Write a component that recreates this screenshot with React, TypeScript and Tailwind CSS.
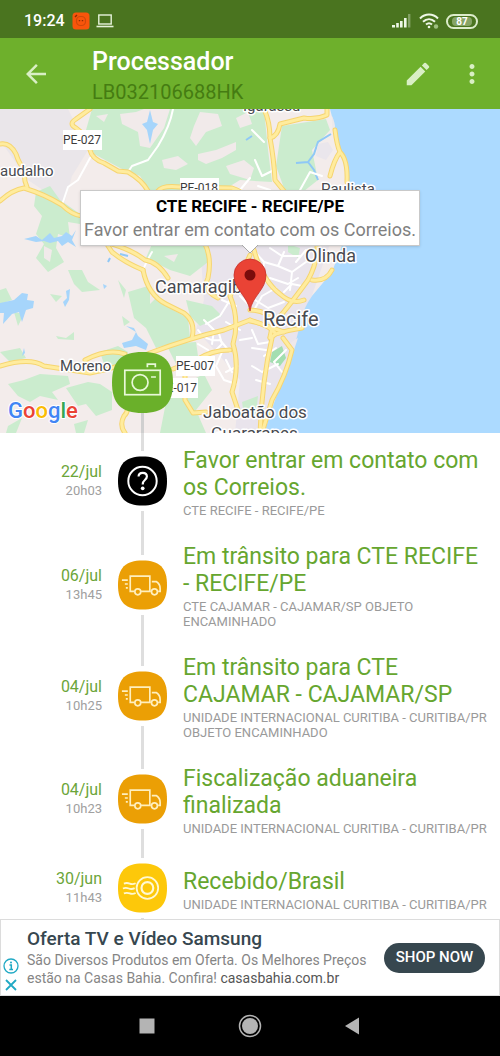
import React from "react";
import { MdArrowBack, MdEdit, MdMoreVert } from "react-icons/md";

type IconKind = "question" | "truck" | "received";

interface TrackingEvent {
  date: string;
  time: string;
  title: string;
  place: string;
  icon: IconKind;
}

const events: TrackingEvent[] = [
  {
    date: "22/jul",
    time: "20h03",
    title: "Favor entrar em contato com os Correios.",
    place: "CTE RECIFE - RECIFE/PE",
    icon: "question",
  },
  {
    date: "06/jul",
    time: "13h45",
    title: "Em trânsito para CTE RECIFE - RECIFE/PE",
    place: "CTE CAJAMAR - CAJAMAR/SP OBJETO ENCAMINHADO",
    icon: "truck",
  },
  {
    date: "04/jul",
    time: "10h25",
    title: "Em trânsito para CTE CAJAMAR - CAJAMAR/SP",
    place: "UNIDADE INTERNACIONAL CURITIBA - CURITIBA/PR OBJETO ENCAMINHADO",
    icon: "truck",
  },
  {
    date: "04/jul",
    time: "10h23",
    title: "Fiscalização aduaneira finalizada",
    place: "UNIDADE INTERNACIONAL CURITIBA - CURITIBA/PR",
    icon: "truck",
  },
  {
    date: "30/jun",
    time: "11h43",
    title: "Recebido/Brasil",
    place: "UNIDADE INTERNACIONAL CURITIBA - CURITIBA/PR",
    icon: "received",
  },
];

const SQUIRCLE = "M25 0C42.500 0 50 7.500 50 25S42.500 50 25 50 0 42.500 0 25 7.500 0 25 0Z";

function StatusBar() {
  return (
    <div className="flex h-[38px] shrink-0 items-center bg-[#4a741f] pl-6 pr-[22px] pt-1 text-white">
      <span className="text-base font-medium">19:24</span>
      <svg className="ml-[7px]" width="18" height="18" viewBox="0 0 18 18">
        <rect x="0.5" y="0.5" width="17" height="17" rx="3.5" fill="#f8550b" />
        <rect x="4.5" y="4.5" width="9" height="9" rx="4" fill="none" stroke="#cf480a" strokeWidth="1.2" />
        <path d="M6.800 8.600h1.400M9.800 8.600h1.400M3 5l2-2" stroke="#8c2d04" strokeWidth="1.4" />
      </svg>
      <svg className="ml-[6px]" width="18" height="14" viewBox="0 0 18 14" fill="none" stroke="#e6f2da">
        <rect x="2.8" y="1" width="12.4" height="9" strokeWidth="1.4" />
        <path d="M0.5 12.5h17" strokeWidth="1.6" />
      </svg>
      <div className="ml-auto flex items-center gap-[7px]">
        <svg width="20" height="14" viewBox="0 0 20 14" fill="#eef7e6">
          <path d="M0 11h3v2.500H0zM4.200 9h2.600v4.500H4.200zM8 7h2.600v6.500H8zM12 4h2.600v9.500H12z" />
          <path d="M16 0h2.400v13.500H16z" opacity="0.35" />
        </svg>
        <svg width="20" height="16" viewBox="0 0 20 16" fill="none" stroke="#eef7e6" strokeWidth="2">
          <path d="M1 5.500C6.200 0.300 13.800 0.300 19 5.500M4 8.700c3.600-3.400 8.400-3.400 12 0M7 11.600c1.800-1.700 4.200-1.700 6 0" />
          <circle cx="10" cy="14" r="1.300" fill="#eef7e6" stroke="none" />
          <circle cx="17" cy="13.500" r="2.200" fill="#9fbf80" stroke="none" />
        </svg>
        <div className="flex h-[15px] w-8 items-center justify-center rounded-full border-2 border-[#dcecca] p-px">
          <span className="flex h-full w-5 items-center justify-center rounded-sm bg-[#86a465] text-[10px] font-bold">
            87
          </span>
        </div>
      </div>
    </div>
  );
}

function Toolbar() {
  return (
    <header className="flex h-[71px] shrink-0 items-center bg-[#6eb02c] pl-[21px] pr-[13px] text-[#d9efc5]">
      <button aria-label="Voltar">
        <MdArrowBack size={30} />
      </button>
      <div className="ml-[41px] flex-1 pt-[6px]">
        <h1 className="text-[25px] font-medium leading-[30px] text-white">Processador</h1>
        <p className="text-xl leading-[30px] text-[#457c12]">LB032106688HK</p>
      </div>
      <button aria-label="Editar">
        <MdEdit size={30} />
      </button>
      <button aria-label="Mais opções" className="ml-6">
        <MdMoreVert size={30} />
      </button>
    </header>
  );
}

const mainRoads = [
  "M90 109L76 119Q68 124 76 128Q88 136 90 150Q92 159 104 163L118 171L128 172Q142 180 148 191",
  "M0 144Q10 142 16 154Q19 164 25 170Q23 178 27 187",
  "M0 201Q12 190 24 188Q44 194 62 205Q72 215 82 216Q100 232 112 252Q124 262 143 270",
  "M112 244Q132 250 145 260Q158 262 168 278",
  "M158 191Q162 185 180 187L232 188Q244 192 250 200",
  "M205 244Q212 258 208 278Q202 290 218 298",
  "M143 270Q148 295 166 304L184 313Q196 322 192 338",
  "M0 366Q30 357 44 366Q70 370 90 373Q120 368 150 353Q190 338 224 330L250 320",
  "M85 360Q108 348 125 354",
  "M125 433Q119 425 124 416Q132 409 122 392",
  "M173 369L196 360Q212 350 230 350",
  "M185 372V400L193 413L206 412",
  "M250 255Q240 278 230 296Q240 320 233 344Q240 366 232 392L238 410",
  "M254 250Q262 280 280 294Q292 305 304 300",
  "M264 109Q270 122 270 138Q274 160 275 180L284 191",
  "M327 109V115Q316 120 304 118L280 124Q278 136 270 138",
  "M335 130Q337 146 340 152Q334 160 330 176M340 152Q348 160 347 182",
  "M250 320L284 332M250 310Q266 310 276 322",
  "M317 244Q318 262 308 280Q292 302 282 314Q272 322 270 337M332 270Q326 282 312 280",
  "M250 321Q268 324 276 334Q288 330 302 328M276 334L270 338",
  "M272 338Q262 380 260 433M283 338L292 350Q286 376 272 400L262 433",
];

const streets = [
  "M173 109Q170 126 158 146L148 160L132 166L128 172",
  "M90 158L78 180L68 187L63 202",
  "M143 270Q146 262 152 252",
  "M255 252L264 262L278 266L284 252M264 262L262 278L276 288M278 266L292 272L306 262M292 272L290 290M306 250L296 262M270 248L282 256L300 256M262 278L250 290M276 288L262 296L254 310",
  "M198 330Q206 342 220 340L230 352M204 320L214 330L212 344M230 300L220 316L206 324M222 352L216 366L224 380L236 384M240 330L226 322M252 330L258 344L270 342M255 300L268 308L284 302M252 348L266 350",
  "M238 366L226 372M252 366L262 372L278 364M256 380L270 384M286 350L274 362L282 372",
  "M220 286L232 280L244 286M222 300L236 306M240 296L248 304M262 284L270 278L288 284L298 278M258 270L252 262M284 292L292 284L302 286M218 330L222 344L214 352M198 344L208 350M240 340L252 338M226 360L232 372M264 356L276 348",
  "M252 130L264 142M255 160L262 176L274 170M258 186L270 190M300 190L310 172L322 176M240 190L250 178",
];

function MapLabel({ x, y, size, children }: { x: number; y: number; size: number; children: string }) {
  return (
    <text
      x={x}
      y={y}
      fontSize={size}
      fill="#484a50"
      stroke="#fff"
      strokeWidth="3"
      strokeLinejoin="round"
      paintOrder="stroke"
    >
      {children}
    </text>
  );
}

function RoadBadge({ x, y, children }: { x: number; y: number; children: string }) {
  return (
    <g>
      <rect x={x} y={y} width="39" height="20" fill="#fff" />
      <text x={x + 19} y={y + 14} fontSize="12" textAnchor="middle" fill="#3c3c3c">
        {children}
      </text>
    </g>
  );
}

function TrackingMap() {
  return (
    <section className="relative h-[324px] shrink-0 overflow-hidden">
      <svg
        className="h-full w-full"
        viewBox="0 109 500 324"
        preserveAspectRatio="xMidYMid slice"
        role="img"
        aria-label="Mapa de Recife"
      >
        <rect y="109" width="500" height="324" fill="#f3eceb" />
        <path d="M0 109H68L88 150L72 176L64 204L28 180L0 140Z" fill="#eae6ea" />
        <path d="M200 244H330L300 330L290 370L262 433H235L240 380L220 356L196 330L204 300Z" fill="#e9e4ec" />

        {/* forest */}
        <g fill="#cbecce">
          <path d="M92 109H264L268 150L272 182L240 180L222 191H150L140 176L120 168L94 154L86 130Z" />
          <path d="M282 126L326 119L330 130L312 150L318 180L304 191H285L276 166Z" />
          <path d="M36 192L50 186L60 200L80 214V224L68 222L70 238L58 234L56 248L64 262L48 272L36 258L44 244L36 234L42 216L34 206Z" />
          <path d="M152 244H205L208 262L190 276L170 270L146 258Z" />
          <path d="M128 292L148 286L162 304L188 318L190 338L156 348L146 328L134 318Z" />
          <path d="M186 300L212 306L222 316L200 326L190 316Z" />
          <path d="M0 290L6 288L12 300L0 304ZM68 270H82L88 282L100 290L82 292L74 284ZM14 312L24 314L18 326ZM56 336L66 338L74 332V340L58 339ZM100 352L118 346L128 352L122 368L104 364Z" />
          <path d="M166 344L196 342L198 356L176 364Z" />
          <path d="M0 352L20 348L26 358L10 362ZM8 384L24 380L40 374L68 376L70 384L52 392L58 400L40 396L30 402L18 396ZM66 388L88 382L100 384L112 392V410L96 416L86 404L78 406Z" />
          <path d="M168 392L204 374L212 390L196 410L206 433H160Z" />
          <path d="M8 426L22 418L16 433H6ZM74 424L88 420L84 433H76ZM242 402L258 396L256 414H244Z" />
          <path d="M288 244L300 248L298 258L288 252ZM118 280L126 290L124 298ZM122 316L130 322L124 326ZM50 294L62 296L56 302Z" />
        </g>
        <path d="M272 352L282 346L286 358L280 366L270 362Z" fill="#a3deb0" />

        {/* clearings */}
        <g fill="#f1eaea">
          <path d="M120 114L136 112L144 109H170L164 128L150 148L140 146L138 132L122 124Z" />
          <path d="M194 126L200 112L218 114L222 126L206 132L196 146L190 138Z" />
          <path d="M198 154L216 150L236 142V150L222 158L206 164L198 160ZM162 160L178 156L188 164L176 170L164 168ZM226 166L244 160L254 168L250 180L230 174ZM236 118L248 112L252 124L240 128ZM96 116L108 114L104 122Z" />
          <path d="M150 292L156 298L150 304ZM164 256L178 254L174 262ZM44 246L52 250L50 262L44 258Z" />
        </g>

        {/* water */}
        <g fill="#a6d5fb">
          <path d="M330 109H500V433H264Q274 402 284 376Q294 350 300 325Q302 310 312 296Q322 284 332 272Q338 256 344 240Q350 210 348 188Q344 162 339 144Q334 124 330 109Z" fill="#acdaff" />
          <path d="M0 303L14 300L22 293L28 294L27 300L34 301L33 308L26 310L22 322L19 312L12 314L3 324L4 313H0Z" />
          <path d="M24 239L36 236L42 240L50 233L54 238L62 236L66 232L72 236L76 230L72 240L76 247L68 242L62 246L58 241L50 243L44 241L36 242L28 240Z" />
          <path d="M142 124L147 122L150 110L153 122L158 124L153 130L150 144L147 130Z" />
          <path d="M66 291L70 289L69 300L65 307L63 302L67 298ZM103 284L107 286L104 289ZM122 343L132 340L136 332L126 326L134 328L138 336L148 344L146 350L136 346L124 348ZM24 348L25 353L22 356Z" />
        </g>
        <g fill="none" stroke="#8fc8f6" strokeWidth="2">
          <path d="M331 134L318 142L314 154L308 162L296 163M308 162L314 170L318 180" />
          <path d="M108 262L110 258M120 254L128 256M246 140L252 136" />
        </g>
        <path d="M318 144L328 142L333 150L326 160L316 156Z" fill="#eae6ec" />
        <path d="M332 116Q336 124 335 134L332 128ZM290 343L298 338L294 350Z" fill="#eee8ea" />

        <g fill="none" strokeLinecap="round" strokeLinejoin="round">
          {streets.map((d) => (
            <path key={d} d={d} stroke="#fff" strokeWidth="2" />
          ))}
          {mainRoads.map((d) => (
            <path key={d} d={d} stroke="#f6d570" strokeWidth="5" />
          ))}
          {mainRoads.map((d) => (
            <path key={d} d={d} stroke="#ffec9e" strokeWidth="3" />
          ))}
        </g>

        <RoadBadge x={63} y={130}>PE-027</RoadBadge>
        <RoadBadge x={180} y={178}>PE-018</RoadBadge>
        <RoadBadge x={159} y={378}>PE-017</RoadBadge>
        <RoadBadge x={176} y={356}>PE-007</RoadBadge>

        <MapLabel x={243} y={111} size={15}>Igarassu</MapLabel>
        <MapLabel x={0} y={176} size={15}>audalho</MapLabel>
        <MapLabel x={321} y={194} size={15}>Paulista</MapLabel>
        <MapLabel x={305} y={262} size={18}>Olinda</MapLabel>
        <MapLabel x={155} y={293} size={18}>Camaragibe</MapLabel>
        <MapLabel x={263} y={326} size={20}>Recife</MapLabel>
        <MapLabel x={60} y={371} size={15}>Moreno</MapLabel>
        <MapLabel x={203} y={418} size={17}>Jaboatão dos</MapLabel>
        <MapLabel x={211} y={439} size={17}>Guararapes</MapLabel>

        <path
          d="M250 311C248 296 234 290 234 275A16 16 0 0 1 266 275C266 290 252 296 250 311Z"
          fill="#ea4335"
          stroke="#c5302a"
          strokeWidth="0.800"
        />
        <circle cx="250" cy="275" r="5.500" fill="#7a0c0c" />

        <text
          x="8"
          y="418"
          fontSize="22"
          fontWeight="500"
          stroke="#fff"
          strokeWidth="2"
          strokeLinejoin="round"
          paintOrder="stroke"
        >
          <tspan fill="#4285f4">G</tspan>
          <tspan fill="#ea4335">o</tspan>
          <tspan fill="#fbbc05">o</tspan>
          <tspan fill="#4285f4">g</tspan>
          <tspan fill="#34a853">l</tspan>
          <tspan fill="#ea4335">e</tspan>
        </text>
      </svg>

      <div className="absolute left-1/2 top-[81px] w-[340px] -translate-x-1/2">
        <div className="border border-[#c9c9c9] bg-white py-[3px] text-center shadow-sm">
          <p className="text-[17px] font-bold leading-6 text-black">CTE RECIFE - RECIFE/PE</p>
          <p className="whitespace-nowrap text-lg leading-6 text-[#808080]">Favor entrar em contato com os Correios.</p>
        </div>
        <svg className="mx-auto -mt-px" width="18" height="9" viewBox="0 0 18 9">
          <path d="M1 0L9 8L17 0" fill="#fff" stroke="#a8a8a8" />
          <path d="M2 0H16" stroke="#fff" strokeWidth="2" />
        </svg>
      </div>

      <div className="absolute bottom-0 left-28 flex flex-col items-center">
        <button aria-label="Foto">
          <svg className="block" width="61" height="61" viewBox="0 0 50 50">
            <path d={SQUIRCLE} fill="#6ab02a" />
            <g fill="none" stroke="#e8f8d8" strokeWidth="1.400">
              <rect x="10.500" y="15" width="29" height="20" />
              <circle cx="23" cy="25" r="6.500" />
              <path d="M32 20.500h4M29 12.500V10h6.500v2.500" />
            </g>
          </svg>
        </button>
        <span className="h-5 w-[3px] bg-[#cfcfcf]" />
      </div>
    </section>
  );
}

function EventIcon({ kind }: { kind: IconKind }) {
  if (kind === "question") {
    return (
      <svg width="49" height="50" viewBox="0 0 50 50" fill="none" stroke="#fff" strokeWidth="2">
        <path d={SQUIRCLE} fill="#000" stroke="none" />
        <circle cx="25" cy="25" r="14.500" />
        <path d="M21 20.500C21 15.500 29.500 15.500 29.500 20.500C29.500 24 25.200 23.500 25.200 28.500" strokeWidth="2.200" />
        <circle cx="25.200" cy="32.500" r="1.900" fill="#fff" stroke="none" />
      </svg>
    );
  }
  if (kind === "received") {
    return (
      <svg width="49" height="50" viewBox="0 0 50 50" fill="none" stroke="#fff8d2" strokeWidth="1.800">
        <path d={SQUIRCLE} fill="#fdc80a" stroke="none" />
        <circle cx="30" cy="25" r="11" />
        <circle cx="30" cy="25" r="6" strokeWidth="2.200" />
        <path d="M6 20.500q3-1.200 6 0t6-0.400M5 25.500q3-1.200 6 0t6-0.400M6 30.500q3-1.200 6 0t6-0.400" />
      </svg>
    );
  }
  return (
    <svg width="49" height="50" viewBox="0 0 50 50" fill="none" stroke="#ffefbe" strokeWidth="1.700">
      <path d={SQUIRCLE} fill="#eb9f05" stroke="none" />
      <path d="M17 31.500H12.500V16H32.500V31.500H23.500M34.500 21.500H39Q43 24 43 28.500V31.500H41M32.500 31.500H33.500" />
      <circle cx="20.200" cy="32" r="3" />
      <circle cx="37.200" cy="32" r="3" />
      <path d="M4 20h6M7 24h3M8 28h2" />
    </svg>
  );
}

function EventRow({ event }: { event: TrackingEvent }) {
  return (
    <li className="flex shrink-0">
      <div className="flex w-[102px] flex-col justify-center text-right">
        <span className="text-base leading-5 text-[#6ba539]">{event.date}</span>
        <span className="text-[13px] leading-[18px] text-[#a0a0a0]">{event.time}</span>
      </div>
      <div className="ml-4 flex flex-col items-center gap-[5px]">
        <span className="min-h-[11px] w-[3px] flex-1 bg-[#dedede]" />
        <EventIcon kind={event.icon} />
        <span className="min-h-[11px] w-[3px] flex-1 bg-[#dedede]" />
      </div>
      <div className="ml-4 flex flex-1 flex-col justify-center pb-[11px] pr-3 pt-[14px]">
        <h2 className="text-[23px] leading-[27px] text-[#66a62f]">{event.title}</h2>
        <p className="mt-[2px] text-[13px] leading-[15px] text-[#9a9a9a]">{event.place}</p>
      </div>
    </li>
  );
}

function AdBanner() {
  return (
    <aside className="flex h-[77px] shrink-0 items-center border border-[#dcdcdc] bg-white pr-[14px]">
      <div className="flex w-[26px] flex-col gap-1 self-end pb-[3px] pl-[2px]">
        <svg width="16" height="16" viewBox="0 0 16 16" fill="none" stroke="#20a9c4" strokeWidth="1.300">
          <circle cx="8" cy="8" r="7" />
          <path d="M6.500 7H8.300V11.500M6.300 11.500H10" strokeWidth="1.500" />
          <circle cx="8" cy="4.500" r="1" fill="#20a9c4" stroke="none" />
        </svg>
        <button aria-label="Fechar anúncio">
          <svg width="16" height="14" viewBox="0 0 16 14" stroke="#20a9c4" strokeWidth="1.800">
            <path d="M3 2L13 12M13 2L3 12" />
          </svg>
        </button>
      </div>
      <div className="flex-1 whitespace-nowrap pb-[2px]">
        <h3 className="text-[19px] font-medium leading-6 text-[#37474f]">Oferta TV e Vídeo Samsung</h3>
        <p className="text-[14px] leading-[18px] text-[#858585]">
          São Diversos Produtos em Oferta. Os Melhores Preços
          <br />
          estão na Casas Bahia. Confira! <span className="text-[#555]">casasbahia.com.br</span>
        </p>
      </div>
      <a
        href="#"
        className="flex h-[30px] w-[101px] items-center justify-center whitespace-nowrap rounded-full bg-[#37474f] text-[15px] font-medium text-white"
      >
        SHOP NOW
      </a>
    </aside>
  );
}

function NavBar() {
  return (
    <nav className="flex h-[60px] shrink-0 items-center justify-center gap-[80px] bg-black">
      <button aria-label="Recentes">
        <svg width="22" height="22" viewBox="0 0 22 22">
          <rect x="3.500" y="3.500" width="15" height="15" fill="#b4b4b4" />
        </svg>
      </button>
      <button aria-label="Início">
        <svg width="24" height="24" viewBox="0 0 24 24">
          <circle cx="12" cy="12" r="10.500" fill="none" stroke="#b4b4b4" strokeWidth="1.500" />
          <circle cx="12" cy="12" r="8" fill="#b4b4b4" />
        </svg>
      </button>
      <button aria-label="Voltar">
        <svg width="22" height="22" viewBox="0 0 22 22">
          <path d="M3 11L17 2.500V19.500Z" fill="#b4b4b4" />
        </svg>
      </button>
    </nav>
  );
}

export default function App() {
  return (
    <div className="flex h-screen flex-col bg-white font-[Roboto,sans-serif]">
      <StatusBar />
      <Toolbar />
      <main className="flex min-h-0 flex-1 flex-col overflow-hidden">
        <TrackingMap />
        <ul className="flex flex-col">
          {events.map((event) => (
            <EventRow key={event.date + event.time} event={event} />
          ))}
        </ul>
      </main>
      <AdBanner />
      <NavBar />
    </div>
  );
}
